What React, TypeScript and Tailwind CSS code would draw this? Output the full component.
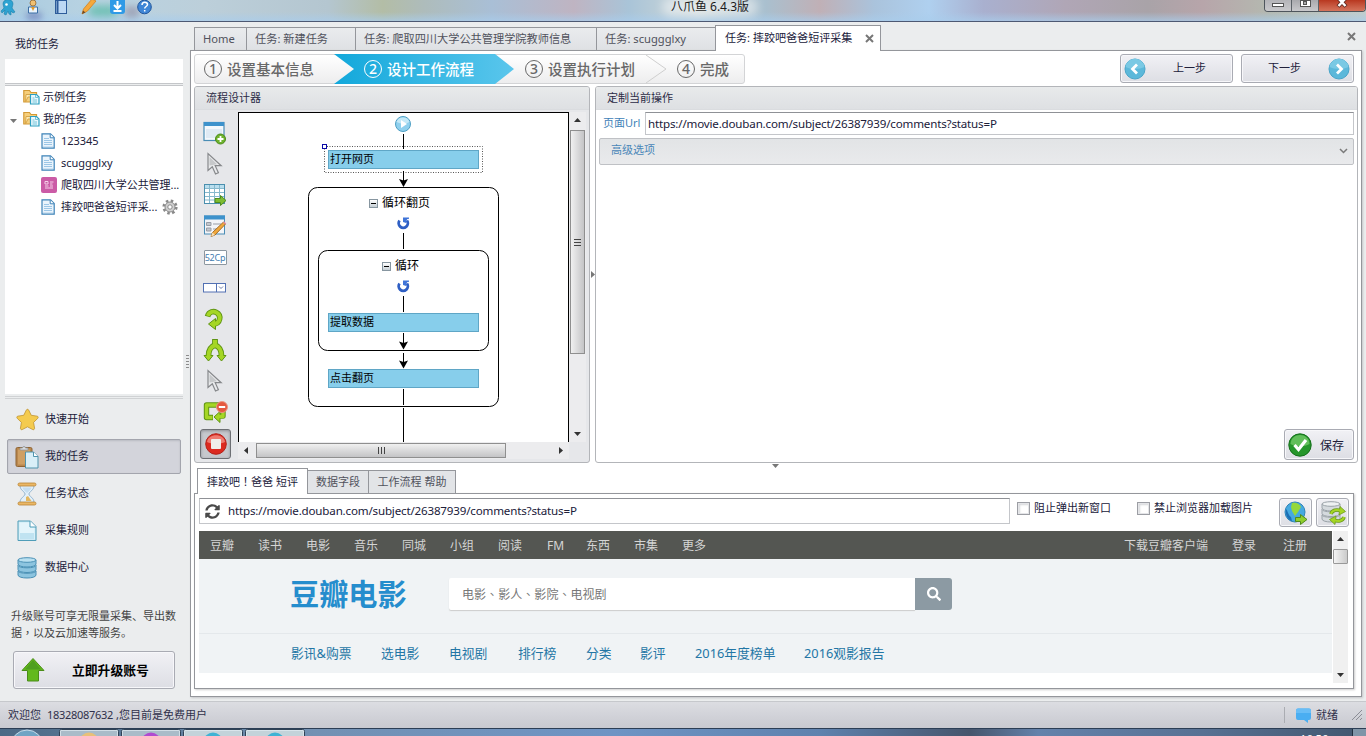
import type { ReactNode } from 'react'
import clsx from 'clsx'
import { FaSearch, FaStar, FaSyncAlt } from 'react-icons/fa'

const tabs = [
  { label: 'Home', cls: 'w-[52px]' },
  { label: '任务: 新建任务', cls: 'w-[109px]' },
  { label: '任务: 爬取四川大学公共管理学院教师信息', cls: 'w-[241px]' },
  { label: '任务: scuggglxy', cls: 'w-[119px]' },
]

const siteNav = ['豆瓣', '读书', '电影', '音乐', '同城', '小组', '阅读', 'FM', '东西', '市集', '更多']

const movieNav = [
  { label: '影讯&购票', cls: 'w-[90px]' },
  { label: '选电影', cls: 'w-[68px]' },
  { label: '电视剧', cls: 'w-[69px]' },
  { label: '排行榜', cls: 'w-[68px]' },
  { label: '分类', cls: 'w-[54px]' },
  { label: '影评', cls: 'w-[55px]' },
  { label: '2016年度榜单', cls: 'w-[109px]' },
  { label: '2016观影报告', cls: 'w-[90px]' },
]

const PAGE_URL = 'https://movie.douban.com/subject/26387939/comments?status=P'

/* ---------- icons ---------- */

const FolderIcon = () => (
  <svg width="17" height="16" viewBox="0 0 17 16">
    <path d="M.8 13V1.500h5.700l1.500 2H13.500V13z" fill="#f6cf7c" stroke="#d39a36" strokeWidth="1.200" />
    <path d="M3 5.500h10.500v2.500L5 8l-2.500 5z" fill="#fde9b4" stroke="#d9a748" />
    <path d="M7.500 5.500h6l2.500 2.500v7h-8.500z" fill="#eaf8fd" stroke="#2c9fc0" strokeWidth="1.200" />
    <path d="M9.500 9h2M9.500 11h4.500M9.500 13h4.500M12.500 6v2.500H15" stroke="#55b6cf" fill="none" strokeWidth=".8" />
  </svg>
)

const FileIcon = () => (
  <svg width="14" height="16" viewBox="0 0 14 16">
    <path d="M1 .8h8.500L13.200 4.500V15.200H1z" fill="#eaf4fc" stroke="#3e83b8" strokeWidth="1.200" />
    <path d="M9.200 1v3.800H13" fill="#fff" stroke="#3e83b8" />
    <path d="M3 5.500h5M3 7.500h8M3 9.500h8M3 11.500h8" stroke="#9cc6e6" />
    <path d="M2 13.500h10" stroke="#cfe3f3" />
  </svg>
)

const PinkIcon = () => (
  <svg width="16" height="16" viewBox="0 0 16 16">
    <rect width="16" height="16" rx="2" fill="#cb5ba6" />
    <path d="M4 4.500h3v2.500H4zM9 5h3.500M9 7h2.500M4 9h3.500M4 11h8M9 9h3" stroke="#f6cfe8" fill="none" />
  </svg>
)

const GearIcon = () => (
  <svg width="16" height="16" viewBox="0 0 16 16">
    <circle cx="8" cy="8" r="6.300" fill="none" stroke="#8a8a8a" strokeWidth="2.600" strokeDasharray="2.500 2.448" />
    <circle cx="8" cy="8" r="5" fill="#cfcfcf" stroke="#8a8a8a" />
    <circle cx="8" cy="8" r="2.200" fill="#fff" stroke="#8a8a8a" />
  </svg>
)

const ClipboardIcon = () => (
  <svg width="24" height="24" viewBox="0 0 24 24">
    <rect x="1" y="2.500" width="16" height="19" rx="1.500" fill="#b9874e" stroke="#8f6433" />
    <rect x="3" y="4.500" width="12" height="15" fill="#cf9f63" />
    <path d="M5 5V3h2.500a1.500 1.500 0 0 1 3 0H13v2z" fill="#dadde0" stroke="#8f9499" strokeWidth=".8" />
    <path d="M10.500 7h8l4.500 4.500V23H10.500z" fill="#d9eff8" stroke="#4f93ad" />
    <path d="M18.500 7v4.500H23" fill="#fff" stroke="#4f93ad" />
  </svg>
)

const HourglassIcon = () => (
  <svg width="20" height="24" viewBox="0 0 20 24">
    <path d="M3 3.500h14c0 5-5 6-5 8.500s5 3.500 5 8.500H3c0-5 5-6 5-8.500s-5-3.500-5-8.500z" fill="#e2f0fa" stroke="#8fb2cd" />
    <path d="M5.500 5.500h9c-1 3-3 4-4.500 5.500-1.500-1.500-3.500-2.500-4.500-5.500z" fill="#c5def0" />
    <path d="M9 15l2-1 3.500 5H9z" fill="#e3b860" />
    <rect x="1" y="1" width="18" height="3" rx="1.500" fill="#eab765" stroke="#b98434" strokeWidth=".8" />
    <rect x="1" y="20" width="18" height="3" rx="1.500" fill="#eab765" stroke="#b98434" strokeWidth=".8" />
  </svg>
)

const PageIcon = () => (
  <svg width="20" height="22" viewBox="0 0 20 22">
    <path d="M1 1h12.500L19 6.500V20.500H1z" fill="#cfeaf5" stroke="#4f9db8" />
    <path d="M2.500 2.500h10v5h5V19h-15z" fill="#e4f5fb" />
    <path d="M3 13h14v6H3z" fill="#c0e3f1" />
    <path d="M13 1v6h6" fill="#fff" stroke="#4f9db8" />
  </svg>
)

const DatabaseIcon = ({ grey }: { grey?: boolean }) => (
  <svg width="20" height="22" viewBox="0 0 20 22">
    {[14, 8.5, 3].map((y) => (
      <g key={y}>
        <path
          d={`M1 ${y}v4c0 4 18 4 18 0v-4z`}
          fill={grey ? '#d5dade' : '#8cc4df'}
          stroke={grey ? '#9aa2a8' : '#4a90b5'}
        />
        <ellipse cx="10" cy={y} rx="9" ry="2.300" fill={grey ? '#eef1f3' : '#b9e0f0'} stroke={grey ? '#9aa2a8' : '#4a90b5'} />
      </g>
    ))}
  </svg>
)

const CursorIcon = () => (
  <svg width="18" height="24" viewBox="0 0 18 24">
    <path d="M2 1.500v17l4.300-3.800 3.200 7.300 2.900-1.300-3.200-7h6z" fill="#e9eaec" stroke="#86888b" strokeWidth="1.200" />
    <path d="M3.500 5v8.500L11 12.300z" fill="#c6c8ca" />
  </svg>
)

const OpenPageIcon = () => (
  <svg width="24" height="24" viewBox="0 0 24 24">
    <rect x="1" y="1.500" width="20" height="18" fill="#f3f8fc" stroke="#4a8db5" strokeWidth="1.200" />
    <rect x="1" y="1" width="20" height="4" fill="#3d92cc" />
    <path d="M3 8h16v9H3z" fill="#dfeaf4" />
    <circle cx="17.500" cy="18" r="5" fill="#6db22d" stroke="#4b8a1a" />
    <path d="M17.500 15v6M14.500 18h6" stroke="#fff" strokeWidth="1.800" />
  </svg>
)

const TableIcon = () => (
  <svg width="24" height="24" viewBox="0 0 24 24">
    <rect x="1.500" y="1.500" width="20" height="19" fill="#fff" stroke="#4a8fae" />
    <path d="M2 2h19v3H2z" fill="#b9deee" />
    <path d="M2 5.500h19M2 9.500h19M2 13.500h19M2 17h19M6.500 2v18M11.500 2v18M16.500 2v18" stroke="#87b9cd" />
    <path d="M12 15.500h5.500V12.500l5.500 5-5.500 5V19.500H12z" fill="#7dbd31" stroke="#4f8a1c" />
  </svg>
)

const FormIcon = () => (
  <svg width="24" height="24" viewBox="0 0 24 24">
    <rect x="1.500" y="2" width="20" height="18" fill="#f2f4f8" stroke="#4a8db5" />
    <path d="M1 1.500h21v4H1z" fill="#3d92cc" />
    <path d="M3.500 8.500h4.500v3H3.500zM3.500 14h4.500v3H3.500zM10 10h8M10 15h5" fill="#c3c7cd" stroke="#989da6" />
    <path d="M8 22.500l1.500-4L20.500 8l2 2L12 21z" fill="#f0a83c" stroke="#9b6420" strokeWidth=".9" />
    <path d="M20 8.500l2.200 2 1-1-2-2z" fill="#e08ba0" />
    <path d="M8 22.500l1.500-4 2.500 2.500z" fill="#f7dfb8" />
  </svg>
)

const ComboIcon = () => (
  <svg width="24" height="10" viewBox="0 0 24 10">
    <rect x=".5" y=".5" width="22" height="8.500" fill="#fff" stroke="#5271b3" />
    <path d="M13.500 1v8" stroke="#5271b3" />
    <path d="M16 3.500l2 2 2-2" stroke="#6a7ba5" fill="none" />
  </svg>
)

const LoopArrowIcon = () => (
  <svg width="22" height="22" viewBox="0 0 22 22">
    <path d="M3.500 8.500C5 3 10 3.200 12 4.200c6 3 4.500 11.800-3 11.800" fill="none" stroke="#5f9414" strokeWidth="5.600" />
    <path d="M11.500 10.500v11L4.500 16z" fill="#a5d625" stroke="#5f9414" />
    <path d="M3.800 7.800C5.500 3.200 10 3.200 12 4.200c6 3 4.500 11.800-3 11.800" fill="none" stroke="#a5d625" strokeWidth="3.800" />
  </svg>
)

const BranchIcon = () => (
  <svg width="24" height="24" viewBox="0 0 24 24">
    <path d="M12 1v6c-5 2-6.500 5-6.500 11M12 7c5 2 6.500 5 6.500 11" fill="none" stroke="#5f9414" strokeWidth="5.800" />
    <path d="M1 17.500h9l-4.500 5.500zM14 17.500h9l-4.500 5.500z" fill="#a5d625" stroke="#5f9414" />
    <path d="M12 2v5.200c-5 2-6.500 5-6.500 11.500M12 7c5 2 6.500 5 6.500 11.500" fill="none" stroke="#a5d625" strokeWidth="4" />
  </svg>
)

const BreakLoopIcon = () => (
  <svg width="25" height="22" viewBox="0 0 25 22">
    <path d="M10 16.500H3.500V4H20v11h-4" fill="none" stroke="#5f9414" strokeWidth="5.400" strokeLinejoin="round" />
    <path d="M17 10.500v11L11 16z" fill="#a5d625" stroke="#5f9414" />
    <path d="M9.500 16.500h-6V4H20v11.500h-4" fill="none" stroke="#a5d625" strokeWidth="3.400" strokeLinejoin="round" />
    <circle cx="19" cy="6" r="5.500" fill="#e5583f" stroke="#e99684" />
    <path d="M15.800 6h6.400" stroke="#fff" strokeWidth="2" />
  </svg>
)

const StopIcon = () => (
  <svg width="22" height="22" viewBox="0 0 22 22">
    <circle cx="11" cy="11" r="10.300" fill="#dc2a20" stroke="#b5221a" />
    <path d="M2 9c1-9 17-9 18 0-4 2-14 2-18 0z" fill="#ee7a70" />
    <rect x="6" y="6" width="10" height="10" rx="1" fill="#f0eeea" />
  </svg>
)

const CircleArrow = ({ right }: { right?: boolean }) => (
  <svg width="22" height="22" viewBox="0 0 22 22">
    <circle cx="11" cy="11" r="10" fill="#5cb8da" stroke="#4aa5c9" />
    <path d="M1.500 9a9.600 9.600 0 0 1 19 0c-5 2.500-14 2.500-19 0z" fill="#7ac9e4" />
    <path d={right ? 'M9 6.500l4.500 4.500L9 15.500' : 'M13 6.500L8.500 11l4.500 4.500'} fill="none" stroke="#fff" strokeWidth="2.800" />
  </svg>
)

const SaveCheckIcon = () => (
  <svg width="24" height="24" viewBox="0 0 24 24">
    <circle cx="12" cy="12" r="11.200" fill="#26962b" stroke="#16701c" />
    <path d="M2.500 11C3-1 21-1 21.500 11c-5 3-14 3-19 0z" fill="#62bf5a" />
    <path d="M6.500 12l4 4.500L18 7" fill="none" stroke="#fff" strokeWidth="3.200" />
  </svg>
)

const GlobeIcon = () => (
  <svg width="24" height="24" viewBox="0 0 24 24">
    <circle cx="11" cy="11" r="10" fill="#45a9e0" stroke="#2f84b8" />
    <path d="M8 2c4-1 8 1 9 4l-3 5-3 4-3-5-1-4z" fill="#95d83c" />
    <path d="M2 8c2 2 2 6 5 8l1 4C4 19 1 14 2 8z" fill="#1c6fb5" />
    <path d="M11.500 16.500h5v-3l6.500 5-6.500 5v-3h-5z" fill="#8fce2c" stroke="#4f8a1c" />
  </svg>
)

const DataRefreshIcon = () => (
  <span className="relative block h-[24px] w-[24px]">
    <DatabaseIcon grey />
    <svg className="absolute top-[5px] left-[8px]" width="17" height="19" viewBox="0 0 17 19">
      <path d="M2 8c1-4 6-5 10-3M15 11c-1 4-6 5-10 3" fill="none" stroke="#6b9a1e" strokeWidth="3.600" />
      <path d="M11 .5l5.500 5-6.500 3.500zM6 18.500L.5 13.500 7 10z" fill="#a5d625" stroke="#6b9a1e" strokeWidth=".8" />
      <path d="M2 8c1-4 6-5 10-3M15 11c-1 4-6 5-10 3" fill="none" stroke="#a5d625" strokeWidth="2" />
    </svg>
  </span>
)

const Triangle = ({ dir, cls }: { dir: 'up' | 'down' | 'left' | 'right'; cls?: string }) => {
  const d = { up: 'M0 5L3.500 1 7 5z', down: 'M0 2h7L3.500 6z', left: 'M5 0v7L1 3.500z', right: 'M2 0v7l4-3.500z' }[dir]
  return (
    <svg width="7" height="7" viewBox="0 0 7 7" className={clsx('shrink-0', cls)}>
      <path d={d} fill="currentColor" />
    </svg>
  )
}

const CloseMark = ({ cls }: { cls: string }) => (
  <svg width="9" height="9" viewBox="0 0 9 9" className={cls}>
    <path d="M1 1l7 7M8 1L1 8" stroke="#777" strokeWidth="2" />
  </svg>
)

/* ---------- small pieces ---------- */

// punctuation centred in its em box
const Mark = ({ children }: { children: string }) => (
  <span className="font-['Noto_Sans_CJK_TC',sans-serif]">{children}</span>
)

const Button = ({ cls, children }: { cls: string; children: ReactNode }) => (
  <button
    className={clsx(
      'flex items-center rounded-[3px] border border-[#a9abb3] bg-linear-to-b from-[#f1f1f5] to-[#dddee4] shadow-[inset_0_0_0_1px_#f7f7fa]',
      cls,
    )}
  >
    {children}
  </button>
)

const StepLabel = ({ n, text, cls }: { n: string; text: string; cls: string }) => (
  <div className={clsx('flex items-center text-[14.5px] leading-none font-medium', cls)}>
    <span className="flex h-[18px] w-[18px] items-center justify-center rounded-full border-[1.5px] border-current text-[14px] leading-none">
      {n}
    </span>
    <span className="ml-[5px] whitespace-nowrap">{text}</span>
  </div>
)

const PanelHeader = ({ children }: { children: ReactNode }) => (
  <div className="flex h-[23px] shrink-0 items-center rounded-t-[2px] border-b border-[#dadcdf] bg-linear-to-b from-[#e8eaeb] to-[#dee0e3] pl-[11px] text-[#2b2b45]">
    {children}
  </div>
)

/* ---------- sections ---------- */

const TitleBar = () => (
  <div className="relative flex h-[22px] shrink-0 items-start overflow-hidden border-b border-[#4d5973] bg-[linear-gradient(90deg,#a9cbe0_0%,#b9d3e2_7%,#bccfda_15%,#b4c6d0_24%,#b3bda6_28%,#aebcbb_31%,#a9bfd6_36%,#bfb4c2_42%,#a9c4d8_46%,#cfd8d8_51%,#a9c0cf_56%,#c0b0b6_60%,#aac3dc_64%,#afd0ef_68%,#a9b0cf_72%,#b0a6b6_78%,#a9a3a8_84%,#b7a5aa_88%,#b4b9b0_93%,#c3cdcb_100%)]">
    <div className="absolute inset-x-0 bottom-0 h-[9px] bg-linear-to-b from-transparent to-[#a9cdec]/70" />
    <div className="absolute top-[6px] left-[88px] h-[10px] w-[30px] rounded-full bg-[#45b59a]/70 blur-[4px]" />
    <div className="absolute top-[12px] left-[26px] h-[8px] w-[16px] rounded-full bg-[#5560a8]/50 blur-[3px]" />
    <div className="absolute top-[6px] left-[124px] h-[12px] w-[16px] rounded-full bg-[#8a7f98]/50 blur-[3px]" />
    <div className="absolute -top-[2px] left-[662px] h-[18px] w-[96px] rounded-full bg-white/45 blur-[5px]" />
    <div className="relative flex h-[16px] w-[160px] items-start">
      <svg width="160" height="16" viewBox="0 0 160 16">
        <path d="M3 4c0-6 10-6 10 0l-1 4 3 4-2 1-2-2v4l-2-1-1-3-2 4-2-1 1-4-3 3-1-2 3-3z" fill="#2fa3d2" stroke="#1d7fa9" strokeWidth=".6" />
        <circle cx="6.500" cy="4.500" r="1.300" fill="#fff" />
        <path d="M28.500 7h9v6h-9z" fill="#e9f3fb" stroke="#3b6fa6" />
        <circle cx="33" cy="3" r="3" fill="#f0c072" stroke="#8a5a22" strokeWidth=".7" />
        <path d="M31 7h4l-2 4z" fill="#e29a2b" />
        <rect x="55.500" y=".5" width="11" height="13" fill="#bcd8f3" stroke="#2d5c9a" />
        <path d="M57.500 0v14" stroke="#2d5c9a" strokeWidth="2" />
        <path d="M82 14l1.500-5L92-1l4 2-8.500 10z" fill="#f5a93b" stroke="#d6801f" strokeWidth=".8" />
        <path d="M82 14l1-3.500 2.500 2z" fill="#6b4a2a" />
        <rect x="110" y="-3" width="15" height="17" rx="3" fill="#2f9ae6" />
        <path d="M117.500 1v7M114 5l3.500 3.500L121 5M113.500 11h8" fill="none" stroke="#fff" strokeWidth="2" />
        <circle cx="144.500" cy="7" r="6.800" fill="#3f86d6" stroke="#1f559c" />
        <path d="M142 5c0-4 5.500-3.500 5.500-.5 0 2-2.800 2-2.800 4M144.700 10v1.600" fill="none" stroke="#fff" strokeWidth="1.500" />
      </svg>
    </div>
    <div className="relative ml-[500px] w-[100px] text-center text-[12px] leading-[14px] text-[#1a1a1a]">
      八爪鱼 6.4.3版
    </div>
    <div className="relative ml-auto flex h-[12px] w-[102px] overflow-hidden rounded-b-[4px] border border-t-0 border-[#4e555c]">
      <div className="flex w-[27px] items-end justify-center border-r border-[#5c6268] bg-linear-to-b from-[#b4b4b8] to-[#c9c9cc] pb-[4px]">
        <span className="h-[4px] w-[12px] border border-[#555] bg-white" />
      </div>
      <div className="flex w-[27px] items-start justify-center border-r border-[#5c6268] bg-linear-to-b from-[#a9a9ad] to-[#c9c9cc]">
        <span className="flex h-[7px] w-[11px] items-start justify-center border border-[#555] bg-white">
          <span className="h-[4px] w-[4px] border border-[#555] bg-[#aaa]" />
        </span>
      </div>
      <div className="flex flex-1 items-start justify-center bg-linear-to-b from-[#b8371f] to-[#d5745c]">
        <svg width="12" height="8" viewBox="0 0 12 8">
          <path d="M2-2l8 8.500M10-2L2 6.500" stroke="#5b2a20" strokeWidth="4" />
          <path d="M2.500-1.500l7 7.500M9.500-1.500l-7 7.500" stroke="#fff" strokeWidth="2.400" />
        </svg>
      </div>
    </div>
  </div>
)

const TreeRow = ({ icon, text, child, end }: { icon: ReactNode; text: string; child?: boolean; end?: ReactNode }) => (
  <div className={clsx('flex h-[22px] items-center whitespace-nowrap', child ? 'pl-[36px]' : 'pl-[18px]')}>
    <span className="w-[20px] shrink-0">{icon}</span>
    <span className="tracking-[-0.05px]">{text}</span>
    {end}
  </div>
)

const SideItem = ({ icon, text, active }: { icon: ReactNode; text: string; active?: boolean }) => (
  <div
    className={clsx(
      'mx-[7px] mb-[2px] flex h-[35px] w-[174px] items-center border',
      active ? 'rounded-[2px] border-[#a3a5ad] bg-[#d3d4db] shadow-[inset_0_1px_2px_#b9bbc3]' : 'border-transparent',
    )}
  >
    <span className="ml-[7px] flex w-[24px] justify-center">{icon}</span>
    <span className="ml-[6px]">{text}</span>
  </div>
)

const Sidebar = () => (
  <aside className="flex w-[190px] shrink-0 flex-col text-[#20203a]">
    <div className="flex h-[35px] items-end pb-[5px] pl-[15px]">我的任务</div>
    <div className="mx-[5px] mt-[2px] h-[24px] w-[178px] bg-white" />
    <div className="mx-[5px] h-[3px] w-[178px] border-y border-[#c4c6c9]" />
    <div className="relative ml-[5px] h-[308px] w-[178px] overflow-hidden bg-white">
      <Triangle dir="down" cls="absolute top-[31px] left-[5px] text-[#777]" />
      <TreeRow icon={<FolderIcon />} text="示例任务" />
      <TreeRow icon={<FolderIcon />} text="我的任务" />
      <TreeRow child icon={<FileIcon />} text="123345" />
      <TreeRow child icon={<FileIcon />} text="scuggglxy" />
      <TreeRow child icon={<PinkIcon />} text="爬取四川大学公共管理..." />
      <TreeRow child icon={<FileIcon />} text="摔跤吧爸爸短评采..." end={<span className="ml-[5px]"><GearIcon /></span>} />
    </div>
    <div className="mt-[2px] mb-[3px] ml-[5px] h-[3px] w-[178px] shrink-0 border-y border-[#d0d2d4]" />
    <nav className="h-[196px] shrink-0">
      <SideItem text="快速开始" icon={<FaStar size={23} color="#f4cb4f" stroke="#b98b25" strokeWidth={18} />} />
      <SideItem text="我的任务" active icon={<ClipboardIcon />} />
      <SideItem text="任务状态" icon={<HourglassIcon />} />
      <SideItem text="采集规则" icon={<PageIcon />} />
      <SideItem text="数据中心" icon={<DatabaseIcon />} />
    </nav>
    <p className="mt-[10px] ml-[11px] w-[170px] leading-[16px] whitespace-nowrap text-[#444]">
      升级账号可享无限量采集、导出数
      <br />
      据<Mark>，</Mark>以及云加速等服务。
    </p>
    <Button cls="mt-[10px] ml-[13px] h-[38px] w-[162px] shrink-0 pl-[7px]">
      <svg width="24" height="26" viewBox="0 0 24 26">
        <path d="M12 1.500l11 12h-5.500V24h-11V13.500H1z" fill="#62b91c" stroke="#4a8d18" />
        <path d="M12 3l8 9.500H4z" fill="#4f9e20" />
      </svg>
      <span className="mt-[2px] ml-[27px] text-[12.8px] font-bold text-black">立即升级账号</span>
    </Button>
  </aside>
)

const TabBar = () => (
  <div className="flex h-[28px] shrink-0 items-end pl-[4px] text-[#50525c]">
    {tabs.map((t) => (
      <div
        key={t.label}
        className={clsx(
          'flex h-[23px] items-center overflow-hidden border border-r-0 border-b-0 border-[#94969b] bg-linear-to-b from-[#eaecee] to-[#dfe1e4] pl-[8px] text-[11.2px] whitespace-nowrap',
          t.cls,
        )}
      >
        {t.label}
      </div>
    ))}
    <div className="relative -mb-px flex h-[26px] w-[166px] items-center border border-b-0 border-[#94969b] bg-white pl-[9px] text-[11.05px] whitespace-nowrap text-[#20203a]">
      任务: 摔跤吧爸爸短评采集
      <CloseMark cls="mr-[6px] ml-auto" />
    </div>
    <CloseMark cls="mr-[10px] mb-[9px] ml-auto" />
  </div>
)

const Steps = () => (
  <div className="relative flex h-[30px] w-[551px] items-center rounded-[3px] border border-[#d3d4d6] bg-linear-to-b from-white to-[#ededee] text-[#686868]">
    <svg className="absolute -top-px -left-px" width="551" height="30" viewBox="0 0 551 30">
      <defs>
        <linearGradient id="step-active">
          <stop offset="0" stopColor="#12a8db" />
          <stop offset="1" stopColor="#5ac6ec" />
        </linearGradient>
      </defs>
      <path d="M140 0h161l19 15-19 15H140l20-15z" fill="url(#step-active)" />
      <path d="M452 1l20 14-20 14" fill="none" stroke="#cfcfcf" />
    </svg>
    <div className="relative flex items-center pl-[9px]">
      <StepLabel n="1" text="设置基本信息" cls="w-[160px]" />
      <StepLabel n="2" text="设计工作流程" cls="w-[161px] text-white" />
      <StepLabel n="3" text="设置执行计划" cls="w-[152px]" />
      <StepLabel n="4" text="完成" cls="w-[60px]" />
    </div>
  </div>
)

const toolIcons = [
  <OpenPageIcon />,
  <CursorIcon />,
  <TableIcon />,
  <FormIcon />,
  <span className="mt-[2px] flex h-[15px] w-[23px] items-center justify-center rounded-[1px] border border-[#8c97a0] bg-white text-[9px] leading-none tracking-[-0.2px] text-[#3e7cb0]">
    52Cp
  </span>,
  <ComboIcon />,
  <LoopArrowIcon />,
  <BranchIcon />,
  <CursorIcon />,
  <BreakLoopIcon />,
]

const FlowNode = ({ text, cls }: { text: string; cls: string }) => (
  <div className={clsx('absolute left-[89px] h-[19px] w-[151px] border border-[#5fa6c6] bg-[#87ceeb] pl-px text-[11px] leading-[15px] text-black', cls)}>
    {text}
  </div>
)

const FlowTitle = ({ text, cls }: { text: string; cls: string }) => (
  <div className={clsx('absolute flex items-center text-[12px] leading-[16px] whitespace-nowrap text-black', cls)}>
    <span className="mr-[4px] flex h-[9px] w-[9px] items-center justify-center border border-[#8796a0] bg-linear-to-b from-white to-[#c5ced4]">
      <span className="h-px w-[5px] bg-black" />
    </span>
    {text}
  </div>
)

const Redo = ({ y }: { y: number }) => (
  <g transform={`translate(403 ${y})`}>
    <path d="M-3.500 -3.500a4.600 4.600 0 1 0 7.500 0" fill="none" stroke="#2f5fc4" strokeWidth="2.800" />
    <path d="M0 -6.500h6v1.200l-2 .6-.8 3.700-3.200-1z" fill="#3f74d8" />
  </g>
)

const FlowCanvas = () => (
  <div className="relative h-[330px] w-[331px] overflow-hidden border border-b-0 border-black bg-white">
    <svg className="absolute top-0 left-0" width="329" height="329" viewBox="239 113 329 329">
      <rect x="324.500" y="146.500" width="158" height="26" fill="none" stroke="#555" strokeDasharray="1 1.500" />
      <rect x="308.500" y="187.500" width="190" height="219" rx="9" fill="#fff" stroke="#000" />
      <rect x="318.500" y="250.500" width="170" height="100" rx="9" fill="#fff" stroke="#000" />
      <path d="M403.500 134v15M403.500 171v11M403.500 233v16M403.500 296v16M403.500 333v12M403.500 353v10M403.500 389v16M403.500 408v34" stroke="#000" />
      {[187, 349.5, 368.5].map((y) => (
        <path key={y} d={`M403.500 ${y}l-4.500-8 4.500 1.500 4.500-1.500z`} fill="#000" />
      ))}
      <circle cx="403" cy="124" r="7.500" fill="#8fd0ee" stroke="#4e9fc4" />
      <path d="M396.500 122a7 7 0 0 1 13 0q-6 3-13 0z" fill="#c3e8f7" />
      <path d="M401 120l6 4-6 4z" fill="#fff" />
      <Redo y={224} />
      <Redo y={287} />
    </svg>
    <FlowNode text="打开网页" cls="top-[37px]" />
    <span className="absolute top-[31px] left-[83px] h-[5px] w-[5px] border border-[#0a0aa8] bg-white" />
    <FlowTitle text="循环翻页" cls="top-[82px] left-[130px]" />
    <FlowTitle text="循环" cls="top-[145px] left-[143px]" />
    <FlowNode text="提取数据" cls="top-[200px]" />
    <FlowNode text="点击翻页" cls="top-[256px]" />
  </div>
)

const Designer = () => (
  <section className="flex h-[377px] w-[396px] shrink-0 flex-col rounded-[3px] border border-[#b3b5b9] bg-[#e6e7ea]">
    <PanelHeader>流程设计器</PanelHeader>
    <div className="flex min-h-0 flex-1">
      <div className="flex w-[43px] shrink-0 flex-col pt-[7px] pr-[3px]">
        {toolIcons.map((icon, i) => (
          <div key={i} className="flex h-[31px] items-center justify-center">
            {icon}
          </div>
        ))}
        <div className="mt-[2px] ml-[5px] flex h-[30px] w-[31px] items-center justify-center rounded-[3px] border border-[#6d6f74] bg-[#c6c8cd] shadow-[inset_0_1px_3px_#8e9096]">
          <StopIcon />
        </div>
      </div>
      <div className="flex flex-col pt-[2px]">
        <div className="flex">
          <FlowCanvas />
          <div className="flex w-[17px] flex-col items-center bg-[#ececee] py-[5px] text-[#333]">
            <Triangle dir="up" />
            <div className="mt-[6px] flex h-[224px] w-[15px] flex-col items-center justify-center gap-[2px] border border-[#8f8f8f] bg-linear-to-r from-[#f0f0f0] to-[#c4c4c6]">
              <i className="h-px w-[7px] bg-[#444]" />
              <i className="h-px w-[7px] bg-[#444]" />
              <i className="h-px w-[7px] bg-[#444]" />
            </div>
            <Triangle dir="down" cls="mt-auto" />
          </div>
        </div>
        <div className="flex h-[17px] w-[331px] items-center bg-[#ececee] text-[#333]">
          <Triangle dir="left" cls="ml-[5px]" />
          <div className="ml-[6px] flex h-[15px] w-[250px] items-center justify-center gap-[2px] border border-[#8f8f8f] bg-linear-to-b from-[#f0f0f0] to-[#c4c4c6]">
            <i className="h-[7px] w-px bg-[#444]" />
            <i className="h-[7px] w-px bg-[#444]" />
            <i className="h-[7px] w-px bg-[#444]" />
          </div>
          <Triangle dir="right" cls="mr-[5px] ml-auto" />
        </div>
      </div>
    </div>
  </section>
)

const ActionPanel = () => (
  <section className="flex h-[377px] w-[763px] shrink-0 flex-col rounded-[3px] border border-[#b3b5b9] bg-white">
    <PanelHeader>定制当前操作</PanelHeader>
    <div className="mt-[2px] flex items-center pl-[7px]">
      <span className="w-[42px] text-[11px] whitespace-nowrap text-[#3f82b8]">页面Url</span>
      <div className="flex h-[23px] w-[709px] items-center border border-[#c4c6ca] border-t-[#8f9196] pl-[2px] text-[11.600px] tracking-[-0.18px] text-[#20203a]">
        {PAGE_URL}
      </div>
    </div>
    <div className="mt-[3px] ml-[3px] flex h-[27px] w-[755px] items-center rounded-[2px] border border-[#bfc1c5] bg-linear-to-b from-[#e2e4e6] to-[#e9eaec] pr-[5px] pb-[3px] pl-[11px] text-[#4a86b8]">
      高级选项
      <svg className="mt-[2px] ml-auto" width="9" height="7" viewBox="0 0 9 7">
        <path d="M1 1l3.500 3.500L8 1" fill="none" stroke="#7a7a7a" strokeWidth="1.500" />
      </svg>
    </div>
    <Button cls="mt-auto mr-[3px] mb-[2px] ml-auto h-[31px] w-[70px] pl-[3px]">
      <SaveCheckIcon />
      <span className="mt-[2px] ml-[8px] text-[12px] text-[#20203a]">保存</span>
    </Button>
  </section>
)

const CheckItem = ({ text, cls }: { text: string; cls: string }) => (
  <label className={clsx('mt-[3px] flex h-[14px] items-center whitespace-nowrap text-[#20203a]', cls)}>
    <span className="mr-[4px] h-[13px] w-[13px] border border-[#9c9ea4] bg-white shadow-[inset_0_0_0_1px_#e4e5e8,inset_2px_2px_2px_#d5d7da]" />
    {text}
  </label>
)

const Douban = () => (
  <div className="flex h-[152px] w-[1133px] flex-col bg-white">
    <div className="flex h-[28px] shrink-0 items-center bg-[#545652] pt-[2px] pl-[11px] text-[12px] text-[#d5d5d5]">
      {siteNav.map((s) => (
        <span key={s} className={s === 'FM' ? 'w-[40px] pl-px' : 'w-[48px]'}>
          {s}
        </span>
      ))}
      <span className="mr-[24px] ml-auto">下载豆瓣客户端</span>
      <span className="mr-[27px]">登录</span>
      <span className="mr-[25px]">注册</span>
    </div>
    <div className="h-[114px] bg-[#f0f3f5]">
      <div className="flex h-[75px] items-center border-b border-[#e4e8eb] pl-[91px]">
        <div className="w-[159px] pb-[3px] text-[29.2px] leading-none font-bold whitespace-nowrap text-[#258dcd]">豆瓣电影</div>
        <div className="mb-[5px] flex h-[32px] w-[466px] items-center rounded-l-[2px] bg-white pt-px pl-[13px] text-[12px] tracking-[0.05px] text-[#777] shadow-[0_1px_1px_#ccc]">
          <span>
            电影<Mark>、</Mark>影人<Mark>、</Mark>影院<Mark>、</Mark>电视剧
          </span>
        </div>
        <div className="mb-[5px] flex h-[32px] w-[37px] items-center justify-center rounded-r-[3px] bg-[#8c9aa3]">
          <FaSearch size={14} color="#fff" />
        </div>
      </div>
      <div className="flex h-[39px] items-center pl-[92px] text-[12.8px] text-[#2376a5]">
        {movieNav.map((m) => (
          <span key={m.label} className={clsx('shrink-0 whitespace-nowrap', m.cls)}>
            {m.label}
          </span>
        ))}
      </div>
    </div>
  </div>
)

const BrowserPanel = () => (
  <section className="flex flex-col">
    <div className="relative -mb-px flex h-[26px] items-end pl-[3px] text-[#50525c]">
      <div className="flex h-[26px] w-[111px] items-center justify-center border border-b-0 border-[#94969b] bg-white whitespace-nowrap text-[#20203a]">
        <span>
          摔跤吧<Mark>！</Mark>爸爸 短评
        </span>
      </div>
      <div className="mb-px flex h-[23px] w-[61px] items-center justify-center border-t border-r border-[#94969b] bg-[#e2e4e7] text-[11px]">
        数据字段
      </div>
      <div className="mb-px flex h-[23px] w-[87px] items-center justify-center border-t border-r border-[#94969b] bg-[#e2e4e7] text-[11px]">
        工作流程 帮助
      </div>
    </div>
    <div className="h-[196px] w-[1160px] border border-[#94969b] bg-white pt-[4px] pl-[4px] shadow-[1px_1px_2px_#ccc]">
      <div className="flex h-[33px]">
        <div className="flex h-[26px] w-[811px] items-center border border-[#c4c6ca] border-t-[#8f9196] pl-[5px] text-[11.600px] tracking-[-0.18px] text-[#20203a]">
          <FaSyncAlt size={15} color="#4a4a4a" />
          <span className="ml-[8px]">{PAGE_URL}</span>
        </div>
        <CheckItem text="阻止弹出新窗口" cls="ml-[7px] w-[120px]" />
        <CheckItem text="禁止浏览器加载图片" cls="w-[142px]" />
        <Button cls="h-[29px] w-[33px] shrink-0 justify-center">
          <GlobeIcon />
        </Button>
        <Button cls="ml-[4px] h-[29px] w-[33px] shrink-0 justify-center">
          <DataRefreshIcon />
        </Button>
      </div>
      <div className="flex">
        <Douban />
        <div className="ml-px flex h-[152px] w-[15px] flex-col items-center bg-[#f0f0f0] py-[5px] text-[#333]">
          <Triangle dir="up" />
          <div className="mt-[6px] h-[15px] w-[15px] shrink-0 rounded-[1px] border border-[#999] bg-linear-to-r from-[#f4f4f4] to-[#cbcbcb]" />
          <Triangle dir="down" cls="mt-auto" />
        </div>
      </div>
    </div>
  </section>
)

const StatusBar = () => (
  <footer className="flex h-[27px] shrink-0 items-center border-t border-[#c6c8cc] bg-linear-to-b from-[#dcdde2] to-[#c8c9d0] pl-[8px] text-[#30304a]">
    <span className="w-[39px]">欢迎您</span>
    <span className="w-[69px] tracking-[-0.3px]">18328087632</span>
    <span>,您目前是免费用户</span>
    <span className="ml-auto h-[16px] w-px bg-[#aaacb2]" />
    <svg className="ml-[10px]" width="17" height="17" viewBox="0 0 17 17">
      <path d="M3 1.500h11a2 2 0 0 1 2 2V11a2 2 0 0 1-2 2h-1v3l-4-3H3a2 2 0 0 1-2-2V3.500a2 2 0 0 1 2-2z" fill="#4aaef2" />
      <path d="M3 1.500h11a2 2 0 0 1 2 2V6H1V3.500a2 2 0 0 1 2-2z" fill="#69bdf6" />
    </svg>
    <span className="ml-[4px]">就绪</span>
    <svg className="mr-[3px] ml-[13px]" width="12" height="12" viewBox="0 0 12 12">
      <path d="M1 11L11 1M5 11l6-6M9 11l2-2" stroke="#8b8d95" />
    </svg>
  </footer>
)

const Taskbar = () => (
  <div className="flex h-[8px] shrink-0 overflow-hidden border-t border-[#2c3e55] bg-[linear-gradient(90deg,#4c6a86_0%,#7391b3_23%,#6f94c4_45%,#5f82ae_60%,#46556c_71%,#6482ab_76%,#587193_88%,#41566e_100%)]">
    <svg width="59" height="8" viewBox="0 0 59 8">
      <circle cx="27" cy="17" r="16" fill="#6fa4c4" stroke="#c7dcea" />
    </svg>
    {['#e8c078', '#b04bd0', '#3fb3d4', '#3fb3d4'].map((c, i) => (
      <svg key={i} width="62" height="8" viewBox="0 0 62 8">
        <rect x=".5" y=".5" width="59" height="12" rx="2" fill={i > 1 ? '#c3d3da' : '#a9bcc9'} stroke="#2f4256" />
        <path d="M1.500 8V1.500h57V8" fill="none" stroke="#e3edf2" strokeOpacity=".7" />
        <circle cx="30" cy="13" r="9.500" fill={c} />
      </svg>
    ))}
    <span className="mt-[4px] mr-[24px] ml-auto text-[11px] leading-[12px] text-white">16:56</span>
    <span className="w-[14px] border-l border-[#20303f] bg-[#7f95a8]" />
  </div>
)

export default function App() {
  return (
    <div className="flex h-[736px] w-[1366px] flex-col overflow-hidden bg-[#ebedee] font-['Noto_Sans','Noto_Sans_CJK_SC',sans-serif] text-[11px]">
      <TitleBar />
      <div className="flex h-[679px] shrink-0">
        <Sidebar />
        <main className="relative flex w-[1176px] flex-col">
          <div className="absolute top-[333px] -left-[4px] flex flex-col gap-[2px]">
            {[0, 1, 2, 3, 4].map((i) => (
              <i key={i} className="h-px w-[3px] bg-[#8c8c8c]" />
            ))}
          </div>
          <TabBar />
          <div className="flex h-[647px] w-[1172px] shrink-0 flex-col border border-[#94969b] bg-white pt-[3px] pl-[3px] shadow-[1px_1px_2px_#c3c5c8]">
            <div className="flex h-[32px]">
              <Steps />
              <Button cls="ml-[375px] h-[29px] w-[113px] pl-[3px]">
                <CircleArrow />
                <span className="ml-[27px] text-[#20203a]">上一步</span>
              </Button>
              <Button cls="ml-[8px] h-[29px] w-[113px] pl-[26px]">
                <span className="text-[#20203a]">下一步</span>
                <span className="mr-[3px] ml-auto">
                  <CircleArrow right />
                </span>
              </Button>
            </div>
            <div className="flex h-[377px] shrink-0">
              <Designer />
              <div className="flex w-[5px] items-center text-[#777]">
                <Triangle dir="right" cls="-ml-px" />
              </div>
              <ActionPanel />
            </div>
            <div className="flex h-[5px] shrink-0 items-center pl-[578px] text-[#777]">
              <Triangle dir="down" />
            </div>
            <BrowserPanel />
          </div>
        </main>
      </div>
      <StatusBar />
      <Taskbar />
    </div>
  )
}
